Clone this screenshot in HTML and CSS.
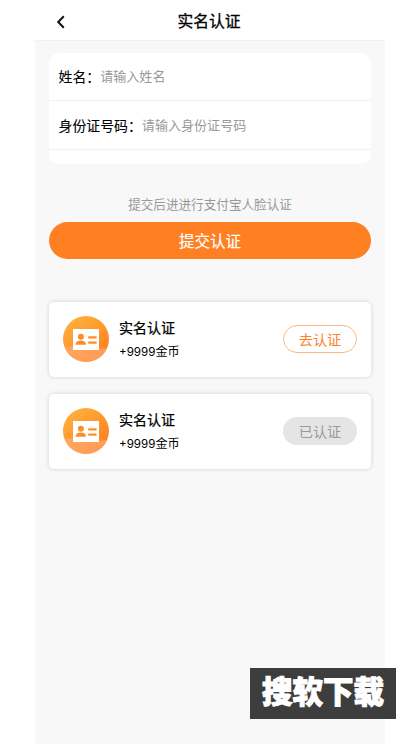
FILE: index.html
```html
<!DOCTYPE html>
<html lang="zh-CN">
<head>
<meta charset="utf-8">
<title>实名认证</title>
<link rel="stylesheet" href="styles.css">
</head>
<body>
<svg class="defs" width="0" height="0" aria-hidden="true">
  <defs>
    <linearGradient id="disc" x1="0.15" y1="0" x2="0.85" y2="1">
      <stop offset="0" stop-color="#ffb33e"/>
      <stop offset="1" stop-color="#ff7a1c"/>
    </linearGradient>
    <clipPath id="round"><circle cx="23" cy="23" r="23"/></clipPath>
    <symbol id="id-card" viewBox="0 0 46 46">
      <circle cx="23" cy="23" r="23" fill="url(#disc)"/>
      <path d="M0 32Q6 29 12 31.5T24 34T35 33T46 32V46H0Z" fill="#ffb287" fill-opacity=".55" clip-path="url(#round)"/>
      <path d="M10 13H36V34H10Z" fill="#fff"/>
      <circle cx="17.9" cy="20.8" r="3" fill="#ff8d26"/>
      <path d="M12.6 28.8Q12.9 24.6 17.9 24.6T22.9 28.8Z" fill="#ff8d26"/>
      <path d="M25.2 21.3H33.6M25.2 26.6H33.6" stroke="#ff8d26" stroke-width="2.2"/>
    </symbol>
  </defs>
</svg>
<div class="screen">
  <header class="bar">
    <svg class="back" viewBox="0 0 10 14"><path d="M7.8 1.2L2.2 7L7.8 12.8"/></svg>
    <h1 class="bar-title">实名认证</h1>
  </header>
  <main class="content">
    <section class="form">
      <div class="field"><span class="label">姓名：</span><span class="hint">请输入姓名</span></div>
      <div class="field"><span class="label">身份证号码：</span><span class="hint">请输入身份证号码</span></div>
    </section>
    <p class="note">提交后进进行支付宝人脸认证</p>
    <div class="submit">提交认证</div>
    <section class="tasks">
      <article class="task">
        <svg class="icon"><use href="#id-card"/></svg>
        <div class="info"><div class="name">实名认证</div><div class="coins"><span class="amount">+9999</span>金币</div></div>
        <div class="pill todo">去认证</div>
      </article>
      <article class="task">
        <svg class="icon"><use href="#id-card"/></svg>
        <div class="info"><div class="name">实名认证</div><div class="coins"><span class="amount">+9999</span>金币</div></div>
        <div class="pill done">已认证</div>
      </article>
    </section>
  </main>
</div>
<div class="watermark">搜软下载</div>
</body>
</html>
```
FILE: styles.css
```css
* { box-sizing: border-box; }
body {
  margin: 0;
  height: 746px;
  overflow: hidden;
  position: relative;
  background: #fff;
  color: #000;
  font-family: "Noto Sans CJK SC", sans-serif;
}
.defs { position: absolute; }
.screen { width: 350px; height: 744px; margin: 0 auto; background: #f8f8f8; }
.bar {
  height: 41px;
  padding: 2px 21px 0;
  display: grid;
  grid-template-columns: 10px 1fr 10px;
  align-items: center;
  background: #fff;
  border-bottom: 1px solid #f1f1f1;
}
.back { width: 10px; height: 14px; margin-top: 2px; fill: none; stroke: #111; stroke-width: 2; }
.bar-title {
  margin: 0;
  padding-right: 2px;
  text-align: center;
  font-size: 15.8px;
  line-height: 24px;
  font-weight: 400;
  -webkit-text-stroke: .3px #000;
}
.content { padding: 12px 14px 0; }
.form { height: 111px; border-radius: 10px; background: #fff; }
.field {
  display: flex;
  align-items: center;
  height: 48px;
  padding-left: 9.5px;
  border-bottom: 1px solid #f1f1f1;
}
.field + .field { height: 49px; }
.label { font-size: 13.9px; line-height: 20px; margin-top: -1px; -webkit-text-stroke: .1px #000; }
.hint { font-size: 13.05px; line-height: 20px; margin-top: -1px; color: #999; }
.note {
  margin: 30px 0 8px;
  text-align: center;
  font-size: 12.6px;
  line-height: 20px;
  color: #999;
}
.submit {
  height: 37px;
  border-radius: 19px;
  background: #ff7f23;
  color: #fff;
  text-align: center;
  font-size: 15.5px;
  line-height: 37px;
  -webkit-text-stroke: .2px #fff;
}
.tasks { display: flex; flex-direction: column; gap: 17px; margin-top: 43px; }
.task {
  display: flex;
  align-items: center;
  height: 75px;
  padding: 0 14px 1px;
  border-radius: 5px;
  background: #fff;
  box-shadow: 0 0 4px rgba(0, 0, 0, .16);
}
.icon { width: 46px; height: 46px; }
.info { flex: 1; margin-left: 10px; }
.name { font-size: 14px; line-height: 24px; -webkit-text-stroke: .25px #000; }
.coins { font-size: 12.1px; line-height: 24px; }
.amount { font-family: Inter, sans-serif; font-size: 11.6px; }
.pill {
  width: 74px;
  height: 28px;
  border-radius: 14px;
  text-align: center;
  font-size: 14.2px;
}
.todo { border: 1px solid #ffb684; color: #ff8128; line-height: 26px; }
.done { background: #e5e5e5; color: #999; line-height: 28px; }
.watermark {
  position: absolute;
  left: 250px;
  top: 668px;
  width: 146px;
  height: 51px;
  background: #3d3d3d;
  color: #fff;
  text-align: center;
  font-size: 30.5px;
  font-weight: 900;
  line-height: 44px;
  -webkit-text-stroke: 1px #fff;
}
```
